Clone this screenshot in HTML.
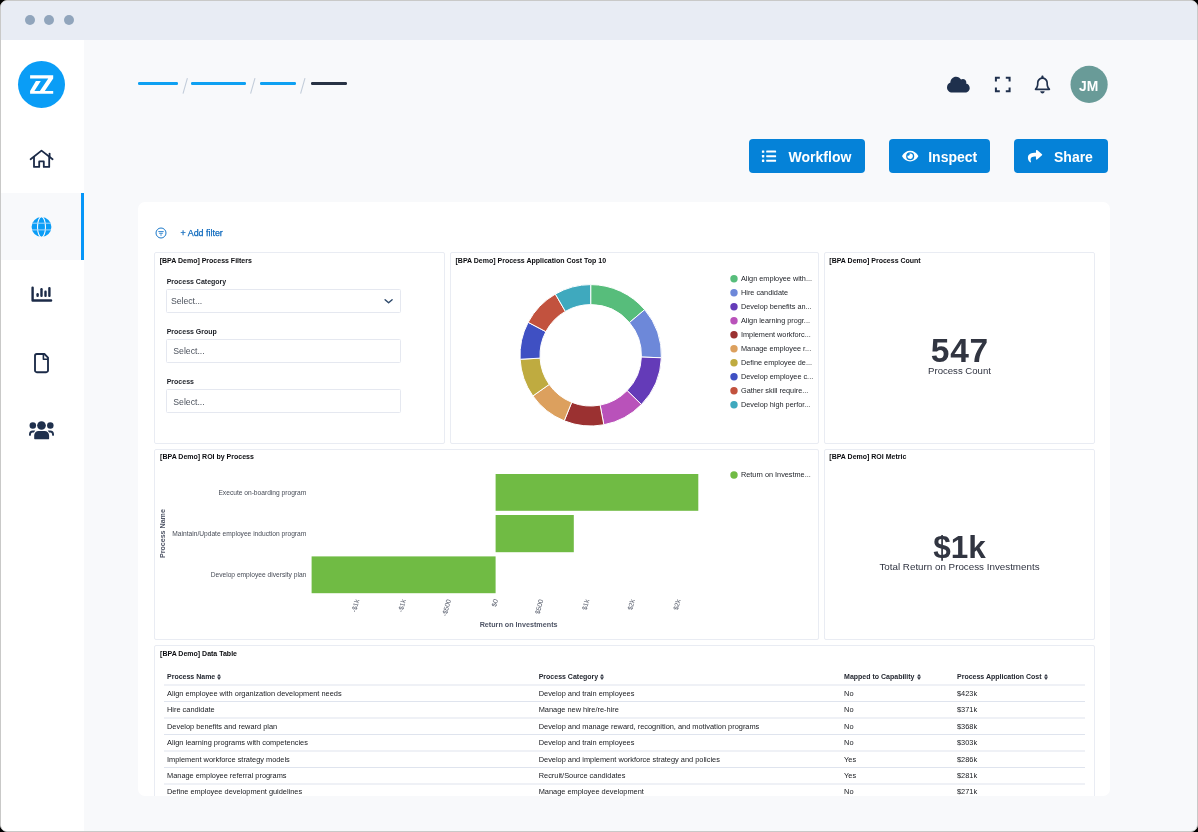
<!DOCTYPE html>
<html><head><meta charset="utf-8">
<style>
*{box-sizing:border-box}
html,body{margin:0;padding:0;width:1198px;height:832px;overflow:hidden;background:#000;font-family:"Liberation Sans",sans-serif}
#frame{position:absolute;left:0;top:0;width:1198px;height:832px;border:1px solid #c9c9c8;border-radius:7px;overflow:hidden;background:#f8f9fb}
#c{position:absolute;left:-1px;top:-1px;width:1198px;height:832px}
.a{position:absolute}
.t{position:absolute;white-space:nowrap;line-height:1}
#card,#c{will-change:transform}
#titlebar{left:0;top:0;width:1198px;height:40px;background:#e8ecf4}
.dot{width:10px;height:10px;border-radius:50%;background:#91a5bc;top:15px}
#side{left:0;top:40px;width:84px;height:792px;background:#fff}
.panel{position:absolute;background:#fff;border:1px solid #e9ecf3;border-radius:2px}
.pt{position:absolute;font-size:7px;font-weight:700;color:#0b0c10;white-space:nowrap;line-height:1}
.lbl{position:absolute;font-size:7px;font-weight:700;color:#1d2027;white-space:nowrap;line-height:1}
.inp{position:absolute;left:166.3px;width:234.3px;height:23.6px;border:1px solid #e5e8f0;border-radius:1.5px;background:#fff}
.lg{position:absolute;left:741px;font-size:7.3px;color:#1c1f25;white-space:nowrap;line-height:1}
.th{position:absolute;top:673px;font-size:7px;font-weight:700;color:#242831;white-space:nowrap;line-height:1}
.td{position:absolute;font-size:7.4px;color:#17191e;white-space:nowrap;line-height:1}
.sel{position:absolute;font-size:8.7px;color:#4c525d;white-space:nowrap;line-height:1}
.btn{position:absolute;top:139px;height:34px;background:#0582d8;border-radius:4px}
.btn .t{color:#fff;font-weight:700;font-size:14px}
</style></head>
<body>
<div id="frame"><div id="c">
  <div id="titlebar" class="a"></div>
  <div class="a dot" style="left:25px"></div>
  <div class="a dot" style="left:44px"></div>
  <div class="a dot" style="left:64px"></div>
  <div id="side" class="a"></div>
  <!-- SIDEBAR -->
  <div class="a" style="left:1px;top:193px;width:80px;height:67px;background:#f8f9fb"></div>
  <div class="a" style="left:81px;top:193px;width:3px;height:67px;background:#0596f8"></div>
  <svg class="a" style="left:0;top:0" width="84" height="460" viewBox="0 0 84 460">
    <circle cx="41.5" cy="84.5" r="23.5" fill="#0a9df6"/>
    <path fill="#fff" d="M30.1 75.3H53.2V78.5L44.8 90.9H53.2V93.7H30.1V90.9L35.9 81H40.8L34.4 90.9H39.9L48.3 78.5H30.1Z"/>
    <g fill="none" stroke="#1b2a47" stroke-width="1.8" stroke-linecap="round" stroke-linejoin="round">
      <path d="M30.6 159.2L41.5 150.6L52.6 159.2"/>
      <path d="M34 157V166.9H39.2V161.4H43.8V166.9H49.2V157"/>
      <path d="M49.6 153.6V156.4"/>
    </g>
    <g>
      <circle cx="41.5" cy="227" r="9.9" fill="#0a9df6"/>
      <g fill="none" stroke="#f8f9fb" stroke-width="1.1">
        <ellipse cx="41.5" cy="227" rx="4" ry="10.2"/>
        <path d="M32 223.2H51M32 229.9H51" stroke="#a6d8fc" stroke-width="1"/>
      </g>
    </g>
    <g fill="#1b2a47">
      <path d="M31.4 287.6a1.2 1.2 0 0 1 2.4 0V299.2H51a1.3 1.3 0 0 1 0 2.6H32.6a1.2 1.2 0 0 1-1.2-1.2Z"/>
      <rect x="36.4" y="293.1" width="2.4" height="3.9" rx="1.1"/>
      <rect x="40.3" y="288.1" width="2.4" height="8.9" rx="1.1"/>
      <rect x="44.3" y="290.6" width="2.4" height="6.4" rx="1.1"/>
      <rect x="48.2" y="287" width="2.4" height="10" rx="1.1"/>
    </g>
    <g fill="none" stroke="#1b2a47" stroke-width="1.85" stroke-linejoin="round">
      <path d="M36.8 354H44.4L48 357.6V370.4A1.8 1.8 0 0 1 46.2 372.2H36.8A1.8 1.8 0 0 1 35 370.4V355.8A1.8 1.8 0 0 1 36.8 354Z"/>
      <path d="M43.4 354.2V359.2H47.8" stroke-width="1.6"/>
    </g>
    <g fill="#1f304d">
      <circle cx="41.5" cy="425.5" r="4.35"/>
      <circle cx="32.8" cy="425.6" r="3.25"/>
      <circle cx="50.3" cy="425.6" r="3.25"/>
      <path d="M34.2 438.6V435.2A4.3 4.3 0 0 1 38.5 430.9H44.6A4.5 4.5 0 0 1 49.1 435.4V438.6A0.5 0.5 0 0 1 48.6 439.2H34.8A0.6 0.6 0 0 1 34.2 438.6Z"/>
      <path d="M29 434.4a3.8 3.8 0 0 1 3.8-3.8H35.3L33.9 432.6H32.8A1.9 1.9 0 0 0 30.9 434.5V434.9A0.9 0.9 0 0 1 29 434.9Z"/>
      <path d="M54 434.4a3.8 3.8 0 0 0-3.8-3.8H47.7L49.1 432.6H50.2A1.9 1.9 0 0 1 52.1 434.5V434.9A0.9 0.9 0 0 0 54 434.9Z"/>
    </g>
  </svg>
  <!-- HEADER -->
  <div class="a" style="left:137.5px;top:82px;width:40px;height:2.6px;border-radius:1.3px;background:#0ea0f2"></div>
  <div class="a" style="left:191.4px;top:82px;width:55px;height:2.6px;border-radius:1.3px;background:#0ea0f2"></div>
  <div class="a" style="left:259.5px;top:82px;width:36.5px;height:2.6px;border-radius:1.3px;background:#0ea0f2"></div>
  <div class="a" style="left:310.8px;top:82px;width:36px;height:2.6px;border-radius:1.3px;background:#283244"></div>
  <svg class="a" style="left:0;top:0" width="1198" height="120" viewBox="0 0 1198 120">
    <g stroke="#c3cdda" stroke-width="1.1" fill="none"><path d="M187.4 78.2L183 93.6M255 78.2L250.6 93.6M305 78.2L300.6 93.6"/></g>
    <path fill="#1f304d" transform="translate(947 75.5) scale(0.0355)" d="M0 336c0 79.5 64.5 144 144 144H512c70.7 0 128-57.3 128-128c0-61.9-44-113.6-102.4-125.4c4.1-10.7 6.4-22.4 6.4-34.6c0-53-43-96-96-96c-19.7 0-38.1 6-53.3 16.2C367 64.2 315.3 32 256 32C167.6 32 96 103.6 96 192c0 2.7 .1 5.4 .2 8.1C40.2 219.8 0 273.2 0 336z"/>
    <g fill="none" stroke="#1f304d" stroke-width="2" stroke-linecap="butt">
      <path d="M995.9 81.6V77.8H999.8M1005.8 77.8H1009.6V81.6M1009.6 87.5V91.3H1005.8M999.8 91.3H995.9V87.5"/>
    </g>
    <path fill="#1f304d" transform="translate(1034.7 75.5) scale(0.0346 0.0352)" d="M224 0c-17.7 0-32 14.3-32 32V51.2C119 66 64 130.6 64 208v25.4c0 45.4-15.5 89.5-43.8 124.9L5.3 377c-5.8 7.2-6.9 17.1-2.9 25.4S14.8 416 24 416H424c9.2 0 17.6-5.3 21.6-13.6s2.9-18.2-2.9-25.4l-14.9-18.6C399.5 322.9 384 278.8 384 233.4V208c0-77.4-55-142-128-156.8V32c0-17.7-14.3-32-32-32zm0 96c61.9 0 112 50.1 112 112v25.4c0 47.9 13.9 94.6 39.7 134.6H72.3C98.1 328 112 281.3 112 233.4V208c0-61.9 50.1-112 112-112zm64 352H224 160c0 17 6.7 33.3 18.7 45.3s28.3 18.7 45.3 18.7s33.3-6.7 45.3-18.7s18.7-28.3 18.7-45.3z"/>
    <circle cx="1089.1" cy="84.4" r="18.6" fill="#699b98"/>
  </svg>
  <div class="t" style="left:1069.6px;width:37.2px;text-align:center;top:78.6px;font-size:14.9px;font-weight:700;color:#fff;transform:scaleX(0.93)">JM</div>
  <!-- BUTTONS -->
  <div class="btn" style="left:749px;width:116px"></div>
  <div class="btn" style="left:889px;width:101px"></div>
  <div class="btn" style="left:1013.5px;width:94px"></div>
  <div class="t" style="left:788.6px;top:149.6px;font-size:14px;font-weight:700;color:#fff">Workflow</div>
  <div class="t" style="left:928.2px;top:149.6px;font-size:14px;font-weight:700;color:#fff">Inspect</div>
  <div class="t" style="left:1054px;top:149.6px;font-size:14px;font-weight:700;color:#fff">Share</div>
  <svg class="a" style="left:0;top:0" width="1198" height="200" viewBox="0 0 1198 200">
    <g fill="#fff">
      <rect x="761.9" y="150.4" width="2.4" height="2.4" rx="0.4"/>
      <rect x="761.9" y="155" width="2.4" height="2.4" rx="0.4"/>
      <rect x="761.9" y="159.5" width="2.4" height="2.4" rx="0.4"/>
      <rect x="766.2" y="150.6" width="9.9" height="2" rx="0.4"/>
      <rect x="766.2" y="155.2" width="9.9" height="2" rx="0.4"/>
      <rect x="766.2" y="159.7" width="9.9" height="2" rx="0.4"/>
    </g>
    <path fill="#fff" transform="translate(902.1 149.0) scale(0.0281)" d="M572.52 241.4C518.29 135.59 410.93 64 288 64S57.68 135.64 3.48 241.41a32.35 32.35 0 0 0 0 29.19C57.71 376.41 165.07 448 288 448s230.32-71.64 284.52-177.41a32.35 32.35 0 0 0 0-29.19zM288 400a144 144 0 1 1 144-144 143.93 143.93 0 0 1-144 144zm0-240a95.310 95.31 0 0 0-25.31 3.79 47.85 47.85 0 0 1-66.9 66.9A95.78 95.78 0 1 0 288 160z"/>
    <path fill="#fff" transform="translate(1027.9 149.0) scale(0.028)" d="M503.691 189.836L327.687 37.851C312.281 24.546 288 35.347 288 56.015v80.053C127.371 137.907 0 170.1 0 322.326c0 61.441 39.581 122.309 83.333 154.132 13.653 9.931 33.111-2.533 28.077-18.631C66.066 312.814 132.917 274.316 288 272.085V360c0 20.7 24.3 31.453 39.687 18.164l176.004-152c11.071-9.562 11.086-26.753 0-36.328z"/>
  </svg>
  <!-- CARD -->
  <div id="card" class="a" style="left:138px;top:202px;width:972px;height:593.5px;background:#fff;border-radius:7px;overflow:hidden">
   <div id="ci" class="a" style="left:-138px;top:-202px;width:1198px;height:832px">
    <svg class="a" style="left:155px;top:227px" width="12" height="12" viewBox="0 0 12 12">
      <circle cx="6" cy="6" r="5" fill="none" stroke="#1b78c9" stroke-width="1"/>
      <path d="M3.3 4.6H8.7M4.2 6.3H7.8M5.2 8H6.8" stroke="#1b78c9" stroke-width="0.9"/>
    </svg>
    <div class="t" style="left:180.6px;top:228.5px;font-size:8.9px;color:#0d69bd;-webkit-text-stroke:0.25px #0d69bd">+ Add filter</div>

    <div class="panel" style="left:154px;top:252px;width:291px;height:192px"></div>
    <div class="panel" style="left:450px;top:252px;width:369px;height:192px"></div>
    <div class="panel" style="left:824px;top:252px;width:271px;height:192px"></div>
    <div class="panel" style="left:154px;top:449px;width:665px;height:191px"></div>
    <div class="panel" style="left:824px;top:449px;width:271px;height:191px"></div>
    <div class="panel" style="left:154px;top:645px;width:941px;height:200px"></div>
    <!-- P1 -->
    <div class="pt" style="left:159.7px;top:256.9px">[BPA Demo] Process Filters</div>
    <div class="lbl" style="left:166.7px;top:277.6px">Process Category</div>
    <div class="inp" style="top:289px;height:24px"></div>
    <div class="sel" style="left:170.9px;top:297px">Select...</div>
    <svg class="a" style="left:383px;top:296px" width="12" height="10" viewBox="0 0 12 10"><path d="M2.1 3.7L5.6 6.8L9.1 3.7" fill="none" stroke="#2f4a6c" stroke-width="1.45" stroke-linecap="round" stroke-linejoin="round"/></svg>
    <div class="lbl" style="left:166.7px;top:327.9px">Process Group</div>
    <div class="inp" style="top:339px;height:24px"></div>
    <div class="sel" style="left:173.3px;top:347.2px">Select...</div>
    <div class="lbl" style="left:166.7px;top:378.4px">Process</div>
    <div class="inp" style="top:389px;height:24px"></div>
    <div class="sel" style="left:173.3px;top:397.6px">Select...</div>
    <!-- P2 -->
    <div class="pt" style="left:455.5px;top:256.9px">[BPA Demo] Process Application Cost Top 10</div>
    <svg class="a" style="left:0;top:0" width="1198" height="450" viewBox="0 0 1198 450"><path d="M590.70 284.60A70.7 70.7 0 0 1 644.70 309.67L629.42 322.58A50.7 50.7 0 0 0 590.70 304.60Z" fill="#57bd7b" stroke="#fff" stroke-width="1"/><path d="M644.70 309.67A70.7 70.7 0 0 1 661.36 357.77L641.37 357.07A50.7 50.7 0 0 0 629.42 322.58Z" fill="#6d88d9" stroke="#fff" stroke-width="1"/><path d="M661.36 357.77A70.7 70.7 0 0 1 641.47 404.50L627.11 390.58A50.7 50.7 0 0 0 641.37 357.07Z" fill="#643bb8" stroke="#fff" stroke-width="1"/><path d="M641.47 404.50A70.7 70.7 0 0 1 603.83 424.77L600.11 405.12A50.7 50.7 0 0 0 627.11 390.58Z" fill="#b952ba" stroke="#fff" stroke-width="1"/><path d="M603.83 424.77A70.7 70.7 0 0 1 564.22 420.85L571.71 402.31A50.7 50.7 0 0 0 600.11 405.12Z" fill="#9b3131" stroke="#fff" stroke-width="1"/><path d="M564.22 420.85A70.7 70.7 0 0 1 532.86 395.95L549.22 384.45A50.7 50.7 0 0 0 571.71 402.31Z" fill="#dca05e" stroke="#fff" stroke-width="1"/><path d="M532.86 395.95A70.7 70.7 0 0 1 520.11 359.25L540.08 358.13A50.7 50.7 0 0 0 549.22 384.45Z" fill="#bfab40" stroke="#fff" stroke-width="1"/><path d="M520.11 359.25A70.7 70.7 0 0 1 528.16 322.33L545.85 331.65A50.7 50.7 0 0 0 540.08 358.13Z" fill="#3f50c3" stroke="#fff" stroke-width="1"/><path d="M528.16 322.33A70.7 70.7 0 0 1 555.35 294.07L565.35 311.39A50.7 50.7 0 0 0 545.85 331.65Z" fill="#c2523e" stroke="#fff" stroke-width="1"/><path d="M555.35 294.07A70.7 70.7 0 0 1 590.70 284.60L590.70 304.60A50.7 50.7 0 0 0 565.35 311.39Z" fill="#3fa9be" stroke="#fff" stroke-width="1"/><circle cx="734" cy="278.8" r="3.7" fill="#57bd7b"/><circle cx="734" cy="292.8" r="3.7" fill="#6d88d9"/><circle cx="734" cy="306.8" r="3.7" fill="#643bb8"/><circle cx="734" cy="320.8" r="3.7" fill="#b952ba"/><circle cx="734" cy="334.8" r="3.7" fill="#9b3131"/><circle cx="734" cy="348.8" r="3.7" fill="#dca05e"/><circle cx="734" cy="362.8" r="3.7" fill="#bfab40"/><circle cx="734" cy="376.8" r="3.7" fill="#3f50c3"/><circle cx="734" cy="390.8" r="3.7" fill="#c2523e"/><circle cx="734" cy="404.8" r="3.7" fill="#3fa9be"/></svg><div class="lg" style="top:275.2px">Align employee with...</div><div class="lg" style="top:289.2px">Hire candidate</div><div class="lg" style="top:303.2px">Develop benefits an...</div><div class="lg" style="top:317.2px">Align learning progr...</div><div class="lg" style="top:331.2px">Implement workforc...</div><div class="lg" style="top:345.2px">Manage employee r...</div><div class="lg" style="top:359.2px">Define employee de...</div><div class="lg" style="top:373.2px">Develop employee c...</div><div class="lg" style="top:387.2px">Gather skill require...</div><div class="lg" style="top:401.2px">Develop high perfor...</div>
    <!-- P3 -->
    <div class="pt" style="left:829.3px;top:256.9px">[BPA Demo] Process Count</div>
    <div class="t" style="left:824px;width:271px;text-align:center;top:334.2px;font-size:33.5px;letter-spacing:0.7px;text-indent:0.7px;font-weight:700;color:#313541">547</div>
    <div class="t" style="left:824px;width:271px;text-align:center;top:365.9px;font-size:9.6px;color:#2f3340">Process Count</div>
    <!-- P4 -->
    <div class="pt" style="left:160.1px;top:453.1px">[BPA Demo] ROI by Process</div>
    <svg class="a" style="left:0;top:0" width="1198" height="650" viewBox="0 0 1198 650">
      <g fill="#70bb44">
        <rect x="495.6" y="474" width="202.7" height="36.8"/>
        <rect x="495.6" y="515" width="78.2" height="37.2"/>
        <rect x="311.6" y="556.4" width="184" height="36.8"/>
      </g>
      <circle cx="734" cy="475" r="3.7" fill="#70bb44"/>
      <g font-family="Liberation Sans" font-size="6.8" fill="#535968" text-anchor="end" dominant-baseline="middle"><text x="357.6" y="599.5" transform="rotate(-75 357.6 599.5)" >-$1k</text><text x="404.2" y="599.5" transform="rotate(-75 404.2 599.5)" >-$1k</text><text x="449.2" y="599.5" transform="rotate(-75 449.2 599.5)" >-$500</text><text x="496.3" y="599.5" transform="rotate(-75 496.3 599.5)" >$0</text><text x="541.6" y="599.5" transform="rotate(-75 541.6 599.5)" >$500</text><text x="587.6" y="599.5" transform="rotate(-75 587.6 599.5)" >$1k</text><text x="633.1" y="599.5" transform="rotate(-75 633.1 599.5)" >$2k</text><text x="678.8" y="599.5" transform="rotate(-75 678.8 599.5)" >$2k</text></g>
      <text x="162.7" y="533.6" transform="rotate(-90 162.7 533.6)" font-family="Liberation Sans" font-size="7.1" font-weight="700" fill="#4f5566" text-anchor="middle" dominant-baseline="middle">Process Name</text>
      <text x="518.6" y="624.6" font-family="Liberation Sans" font-size="7.2" font-weight="700" fill="#4f5566" text-anchor="middle" dominant-baseline="middle">Return on Investments</text>
      <g font-family="Liberation Sans" font-size="6.65" fill="#474c57" text-anchor="end" dominant-baseline="middle">
        <text x="306.3" y="493.2">Execute on-boarding program</text>
        <text x="306.3" y="534.2">Maintain/Update employee induction program</text>
        <text x="306.3" y="575.3">Develop employee diversity plan</text>
      </g>
    </svg>
    <div class="lg" style="top:471.4px">Return on Investme...</div>
    <!-- P5 -->
    <div class="pt" style="left:829.3px;top:453.1px">[BPA Demo] ROI Metric</div>
    <div class="t" style="left:824px;width:271px;text-align:center;top:532.2px;font-size:31.5px;font-weight:700;color:#313541">$1k</div>
    <div class="t" style="left:824px;width:271px;text-align:center;top:561.6px;font-size:9.8px;color:#2f3340">Total Return on Process Investments</div>
    <!-- P6 -->
    <div class="pt" style="left:160.1px;top:649.5px">[BPA Demo] Data Table</div>
    <div class="th" style="left:167px">Process Name<svg width="6" height="7" viewBox="0 0 6 7" style="vertical-align:top;margin-left:2px"><path d="M2 0.9L4 3.6H0ZM2 6.9L4 4.2H0Z" fill="#3a3f4b"/></svg></div>
    <div class="th" style="left:538.7px">Process Category<svg width="6" height="7" viewBox="0 0 6 7" style="vertical-align:top;margin-left:2px"><path d="M2 0.9L4 3.6H0ZM2 6.9L4 4.2H0Z" fill="#3a3f4b"/></svg></div>
    <div class="th" style="left:844.1px">Mapped to Capability<svg width="6" height="7" viewBox="0 0 6 7" style="vertical-align:top;margin-left:2px"><path d="M2 0.9L4 3.6H0ZM2 6.9L4 4.2H0Z" fill="#3a3f4b"/></svg></div>
    <div class="th" style="left:957px">Process Application Cost<svg width="6" height="7" viewBox="0 0 6 7" style="vertical-align:top;margin-left:2px"><path d="M2 0.9L4 3.6H0ZM2 6.9L4 4.2H0Z" fill="#3a3f4b"/></svg></div>
    <div class="td" style="left:167px;top:689.8px">Align employee with organization development needs</div>
    <div class="td" style="left:538.7px;top:689.8px">Develop and train employees</div>
    <div class="td" style="left:844.1px;top:689.8px">No</div>
    <div class="td" style="left:957px;top:689.8px">$423k</div>
    <div class="td" style="left:167px;top:706.2px">Hire candidate</div>
    <div class="td" style="left:538.7px;top:706.2px">Manage new hire/re-hire</div>
    <div class="td" style="left:844.1px;top:706.2px">No</div>
    <div class="td" style="left:957px;top:706.2px">$371k</div>
    <div class="td" style="left:167px;top:722.6px">Develop benefits and reward plan</div>
    <div class="td" style="left:538.7px;top:722.6px">Develop and manage reward, recognition, and motivation programs</div>
    <div class="td" style="left:844.1px;top:722.6px">No</div>
    <div class="td" style="left:957px;top:722.6px">$368k</div>
    <div class="td" style="left:167px;top:739.1px">Align learning programs with competencies</div>
    <div class="td" style="left:538.7px;top:739.1px">Develop and train employees</div>
    <div class="td" style="left:844.1px;top:739.1px">No</div>
    <div class="td" style="left:957px;top:739.1px">$303k</div>
    <div class="td" style="left:167px;top:755.5px">Implement workforce strategy models</div>
    <div class="td" style="left:538.7px;top:755.5px">Develop and implement workforce strategy and policies</div>
    <div class="td" style="left:844.1px;top:755.5px">Yes</div>
    <div class="td" style="left:957px;top:755.5px">$286k</div>
    <div class="td" style="left:167px;top:771.9px">Manage employee referral programs</div>
    <div class="td" style="left:538.7px;top:771.9px">Recruit/Source candidates</div>
    <div class="td" style="left:844.1px;top:771.9px">Yes</div>
    <div class="td" style="left:957px;top:771.9px">$281k</div>
    <div class="td" style="left:167px;top:788.3px">Define employee development guidelines</div>
    <div class="td" style="left:538.7px;top:788.3px">Manage employee development</div>
    <div class="td" style="left:844.1px;top:788.3px">No</div>
    <div class="td" style="left:957px;top:788.3px">$271k</div>
    <div class="td" style="left:167px;top:804.7px">Develop employee retention strategy</div>
    <div class="td" style="left:538.7px;top:804.7px">Manage employee retention</div>
    <div class="td" style="left:844.1px;top:804.7px">No</div>
    <div class="td" style="left:957px;top:804.7px">$268k</div>
    <svg class="a" style="left:0;top:0" width="1198" height="832" viewBox="0 0 1198 832"><g fill="#dfe4ee"><rect x="164" y="684.5" width="921" height="1"/><rect x="164" y="701.0" width="921" height="1"/><rect x="164" y="717.5" width="921" height="1"/><rect x="164" y="734.0" width="921" height="1"/><rect x="164" y="750.5" width="921" height="1"/><rect x="164" y="767.0" width="921" height="1"/><rect x="164" y="783.5" width="921" height="1"/><rect x="164" y="800.0" width="921" height="1"/><rect x="164" y="816.5" width="921" height="1"/></g><g fill="#3a3f4b" id="sorts"></g></svg>
   </div>
  </div>
</div></div>
</body></html>
